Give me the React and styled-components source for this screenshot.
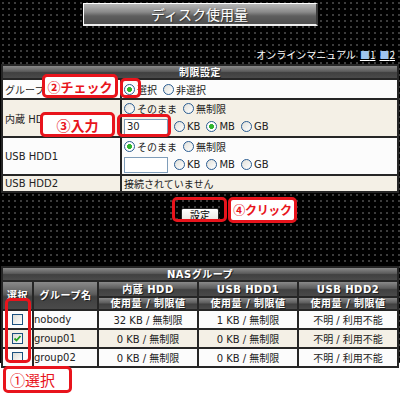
import React from "react";
import styled, { createGlobalStyle } from "styled-components";

const GlobalStyle = createGlobalStyle`
  html, body {
    margin: 0;
    padding: 0;
    background: #fff;
  }
  body {
    font-family: "DejaVu Sans", "Noto Sans CJK JP", sans-serif;
  }
`;

const RED = "#e8141c";

const Screen = styled.div`
  position: relative;
  width: 400px;
  height: 394px;
  overflow: hidden;
  background: #fff;
`;

const Dark = styled.div`
  height: 363px;
  box-sizing: border-box;
  padding: 3px 1px 0;
  background-color: #000;
  background-image: radial-gradient(circle, #3c3c3c 0.9px, transparent 1.3px);
  background-size: 6px 6px;
`;

const Title = styled.div`
  width: 235px;
  height: 23px;
  margin: 0 auto;
  box-sizing: border-box;
  border: 1px solid #fff;
  border-right: 2px solid #3a3a3a;
  border-bottom: 2px solid #eee;
  background: linear-gradient(#b8b8b8, #8a8a8a 40%, #5e5e5e 60%, #4e4e4e);
  color: #fff;
  font-family: "Noto Sans CJK JP", sans-serif;
  font-size: 14px;
  line-height: 20px;
  text-align: center;
  text-shadow: 1px 1px 1px #333;
`;

const Manual = styled.div`
  margin-top: 23px;
  padding-right: 4px;
  text-align: right;
  color: #fff;
  font-family: "Noto Sans CJK JP", sans-serif;
  font-size: 10px;
  line-height: 12px;
  a {
    color: #fff;
    text-decoration: underline;
    margin-left: 4px;
  }
  a span {
    color: #9fc4ee;
  }
`;

const Table = styled.table`
  width: 398px;
  margin-top: ${(p) => p.$top}px;
  border-spacing: 2px;
  background: #262626;
  font-size: 10px;
  color: #222;
  table-layout: fixed;
  td,
  th {
    padding: 0;
  }
`;

const HeadCell = styled.th`
  height: ${(p) => p.$h || 12}px;
  background: linear-gradient(#8a8a8a, #5c5c5c 45%, #404040 55%, #4a4a4a);
  color: #fff;
  font-family: "DejaVu Sans", "Noto Sans CJK JP", sans-serif;
  font-size: 10px;
  font-weight: bold;
  line-height: 11px;
  text-align: center;
  vertical-align: middle;
  text-shadow: 1px 1px 0 #222;
  letter-spacing: 0.5px;
`;

const Cell = styled.td`
  height: ${(p) => p.$h}px;
  background: ${(p) => (p.$beige ? "#f4f0e6" : "#fcfcfc")};
  text-align: ${(p) => p.$align || "left"};
  padding: ${(p) => (p.$pad ? "0 2px" : "0")} !important;
  vertical-align: middle;
  white-space: nowrap;
`;

const Line = styled.div`
  display: flex;
  align-items: center;
  gap: 6px;
  height: ${(p) => p.$h}px;
`;

const Option = styled.label`
  display: inline-flex;
  align-items: center;
  gap: 2px;
`;

const RadioDot = styled.span`
  width: 11px;
  height: 11px;
  box-sizing: border-box;
  border-radius: 50%;
  border: 1px solid #2a5c91;
  background: ${(p) =>
    p.$on
      ? "radial-gradient(circle, #2fb52f 0, #2fb52f 2.2px, #fff 2.8px)"
      : "linear-gradient(135deg, #e0e0da, #fff)"};
`;

const Radio = ({ on, children }) => (
  <Option>
    <RadioDot $on={on} />
    {children}
  </Option>
);

const TextInput = styled.div`
  width: 44px;
  height: 16px;
  box-sizing: border-box;
  border: 1px solid #7f9db9;
  background: #fff;
  padding-left: 2px;
  font-size: 10px;
  line-height: 14px;
`;

const ButtonRow = styled.div`
  display: flex;
  justify-content: center;
  height: 73px;
  padding-top: 15px;
  box-sizing: border-box;
`;

const Button = styled.div`
  width: 38px;
  height: 14px;
  box-sizing: border-box;
  border: 1px solid #222;
  border-radius: 2px;
  background: linear-gradient(#fff, #ecebe6 80%, #d6d0c5);
  font-family: "Noto Sans CJK JP", sans-serif;
  font-size: 10px;
  line-height: 12px;
  text-align: center;
  color: #000;
`;

const Box = styled.span`
  display: inline-block;
  width: 11px;
  height: 11px;
  box-sizing: border-box;
  border: 1px solid #1c5180;
  background: linear-gradient(135deg, #dcdcd6, #fff);
  vertical-align: middle;
  position: relative;
  svg {
    position: absolute;
    left: 0;
    top: 0;
  }
`;

const CheckBox = ({ on }) => (
  <Box>
    {on && (
      <svg width="9" height="9" viewBox="0 0 9 9">
        <path d="M1.5 4.5 L3.5 6.5 L7.5 2" stroke="#21a121" strokeWidth="1.8" fill="none" />
      </svg>
    )}
  </Box>
);

const Frame = styled.div`
  position: absolute;
  left: ${(p) => p.$x}px;
  top: ${(p) => p.$y}px;
  width: ${(p) => p.$w}px;
  height: ${(p) => p.$h}px;
  box-sizing: border-box;
  border: 3px solid ${RED};
  border-radius: 5px;
`;

const Callout = styled(Frame)`
  display: flex;
  align-items: center;
  justify-content: ${(p) => (p.$left ? "flex-start" : "center")};
  padding-left: ${(p) => (p.$left ? 4 : 0)}px;
  background: #fff;
  color: ${RED};
  font-family: "Noto Sans CJK JP", sans-serif;
  font-size: ${(p) => p.$size}px;
  font-weight: ${(p) => (p.$bold ? "bold" : "normal")};
  line-height: 1;
  white-space: nowrap;
  letter-spacing: ${(p) => p.$ls || 0}px;
`;

const groups = [
  { name: "nobody", hdd: "32 KB / 無制限", usb1: "1 KB / 無制限", checked: false },
  { name: "group01", hdd: "0 KB / 無制限", usb1: "0 KB / 無制限", checked: true },
  { name: "group02", hdd: "0 KB / 無制限", usb1: "0 KB / 無制限", checked: false },
];

const SizeOptions = ({ unit }) => (
  <>
    <Radio on={unit === "KB"}>KB</Radio>
    <Radio on={unit === "MB"}>MB</Radio>
    <Radio on={unit === "GB"}>GB</Radio>
  </>
);

export default function App() {
  return (
    <Screen>
      <GlobalStyle />
      <Dark>
        <Title>ディスク使用量</Title>
        <Manual>
          オンラインマニュアル
          <a href="#1"><span>■</span>1</a>
          <a href="#2"><span>■</span>2</a>
        </Manual>

        <Table $top={3}>
          <colgroup>
            <col style={{ width: 117 }} />
            <col />
          </colgroup>
          <tbody>
            <tr>
              <HeadCell colSpan={2}>制限設定</HeadCell>
            </tr>
            <tr>
              <Cell $h={18} $pad>グループ</Cell>
              <Cell $h={18} $pad>
                <Line $h={18}>
                  <Radio on>選択</Radio>
                  <Radio>非選択</Radio>
                </Line>
              </Cell>
            </tr>
            <tr>
              <Cell $h={36} $beige $pad>内蔵 HDD</Cell>
              <Cell $h={36} $beige $pad>
                <Line $h={17}>
                  <Radio>そのまま</Radio>
                  <Radio>無制限</Radio>
                </Line>
                <Line $h={19}>
                  <TextInput>30</TextInput>
                  <SizeOptions unit="MB" />
                </Line>
              </Cell>
            </tr>
            <tr>
              <Cell $h={36} $pad>USB HDD1</Cell>
              <Cell $h={36} $pad>
                <Line $h={17}>
                  <Radio on>そのまま</Radio>
                  <Radio>無制限</Radio>
                </Line>
                <Line $h={19}>
                  <TextInput />
                  <SizeOptions />
                </Line>
              </Cell>
            </tr>
            <tr>
              <Cell $h={14} $beige $pad>USB HDD2</Cell>
              <Cell $h={14} $beige $pad>接続されていません</Cell>
            </tr>
          </tbody>
        </Table>

        <ButtonRow>
          <Button>設定</Button>
        </ButtonRow>

        <Table $top={0}>
          <colgroup>
            <col style={{ width: 29 }} />
            <col style={{ width: 63 }} />
            <col style={{ width: 98 }} />
            <col style={{ width: 98 }} />
            <col style={{ width: 98 }} />
          </colgroup>
          <tbody>
            <tr>
              <HeadCell colSpan={5}>NASグループ</HeadCell>
            </tr>
            <tr>
              <HeadCell rowSpan={2}>選択</HeadCell>
              <HeadCell rowSpan={2}>グループ名</HeadCell>
              <HeadCell $h={14}>内蔵 HDD</HeadCell>
              <HeadCell $h={14}>USB HDD1</HeadCell>
              <HeadCell $h={14}>USB HDD2</HeadCell>
            </tr>
            <tr>
              <HeadCell $h={11}>使用量 / 制限値</HeadCell>
              <HeadCell $h={11}>使用量 / 制限値</HeadCell>
              <HeadCell $h={11}>使用量 / 制限値</HeadCell>
            </tr>
            {groups.map((g, i) => (
              <tr key={g.name}>
                <Cell $h={17} $beige={i === 1} $align="center">
                  <CheckBox on={g.checked} />
                </Cell>
                <Cell $h={17} $beige={i === 1}>{g.name}</Cell>
                <Cell $h={17} $beige={i === 1} $align="center">{g.hdd}</Cell>
                <Cell $h={17} $beige={i === 1} $align="center">{g.usb1}</Cell>
                <Cell $h={17} $beige={i === 1} $align="center">不明 / 利用不能</Cell>
              </tr>
            ))}
          </tbody>
        </Table>
      </Dark>

      <Frame $x={120} $y={78} $w={21} $h={20} />
      <Callout $x={42} $y={74} $w={76} $h={24} $size={13} $bold>②チェック</Callout>
      <Frame $x={117} $y={114} $w={54} $h={23} />
      <Callout $x={40} $y={112} $w={75} $h={25} $size={14} $bold>③入力</Callout>
      <Frame $x={172} $y={197} $w={55} $h={25} />
      <Callout $x={228} $y={197} $w={69} $h={26} $size={12} $ls={-0.3} $bold>④クリック</Callout>
      <Frame $x={5} $y={298} $w={26} $h={65} />
      <Callout $x={3} $y={366} $w={69} $h={27} $size={15} $left>①選択</Callout>
    </Screen>
  );
}
